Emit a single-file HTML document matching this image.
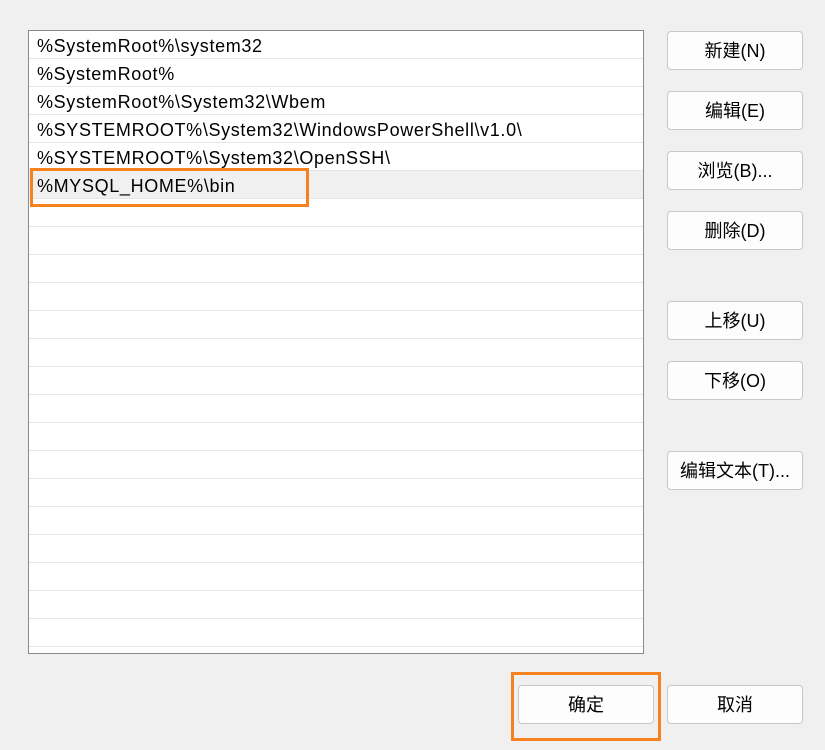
<!DOCTYPE html><html><head><style>
body{margin:0;width:825px;height:750px;background:#f0f0f0;font-family:"Liberation Sans","Noto Sans CJK SC",sans-serif;position:relative;overflow:hidden}
.list{position:absolute;left:28px;top:30px;width:614px;height:622px;border:1px solid #8a8a8a;background:#fff;overflow:hidden}
.row{height:27px;border-bottom:1px solid #e6e6e6;font-size:18px;line-height:30px;padding-left:8px;color:#000;white-space:nowrap;letter-spacing:0.65px}
.sel{background:#f0f0f0}
.btn{position:absolute;width:134px;height:37px;border:1px solid #c8c8c8;border-radius:4px;background:#fdfdfd;font-size:18px;text-align:center;line-height:39px;color:#000}
.hl{position:absolute;border:3px solid #f5821f;box-sizing:border-box}
</style></head><body>
<div class="list">
<div class="row">%SystemRoot%\system32</div>
<div class="row">%SystemRoot%</div>
<div class="row">%SystemRoot%\System32\Wbem</div>
<div class="row">%SYSTEMROOT%\System32\WindowsPowerShell\v1.0\</div>
<div class="row">%SYSTEMROOT%\System32\OpenSSH\</div>
<div class="row sel">%MYSQL_HOME%\bin</div>
<div class="row"></div><div class="row"></div><div class="row"></div><div class="row"></div><div class="row"></div><div class="row"></div><div class="row"></div><div class="row"></div><div class="row"></div><div class="row"></div><div class="row"></div><div class="row"></div><div class="row"></div><div class="row"></div><div class="row"></div><div class="row"></div><div class="row"></div>
</div>
<div class="hl" style="left:30px;top:168px;width:279px;height:39px"></div>
<div class="btn" style="left:667px;top:31px">新建(N)</div>
<div class="btn" style="left:667px;top:91px">编辑(E)</div>
<div class="btn" style="left:667px;top:151px">浏览(B)...</div>
<div class="btn" style="left:667px;top:211px">删除(D)</div>
<div class="btn" style="left:667px;top:301px">上移(U)</div>
<div class="btn" style="left:667px;top:361px">下移(O)</div>
<div class="btn" style="left:667px;top:451px">编辑文本(T)...</div>
<div class="btn" style="left:518px;top:685px">确定</div>
<div class="btn" style="left:667px;top:685px">取消</div>
<div class="hl" style="left:511px;top:672px;width:150px;height:69px"></div>
</body></html>
